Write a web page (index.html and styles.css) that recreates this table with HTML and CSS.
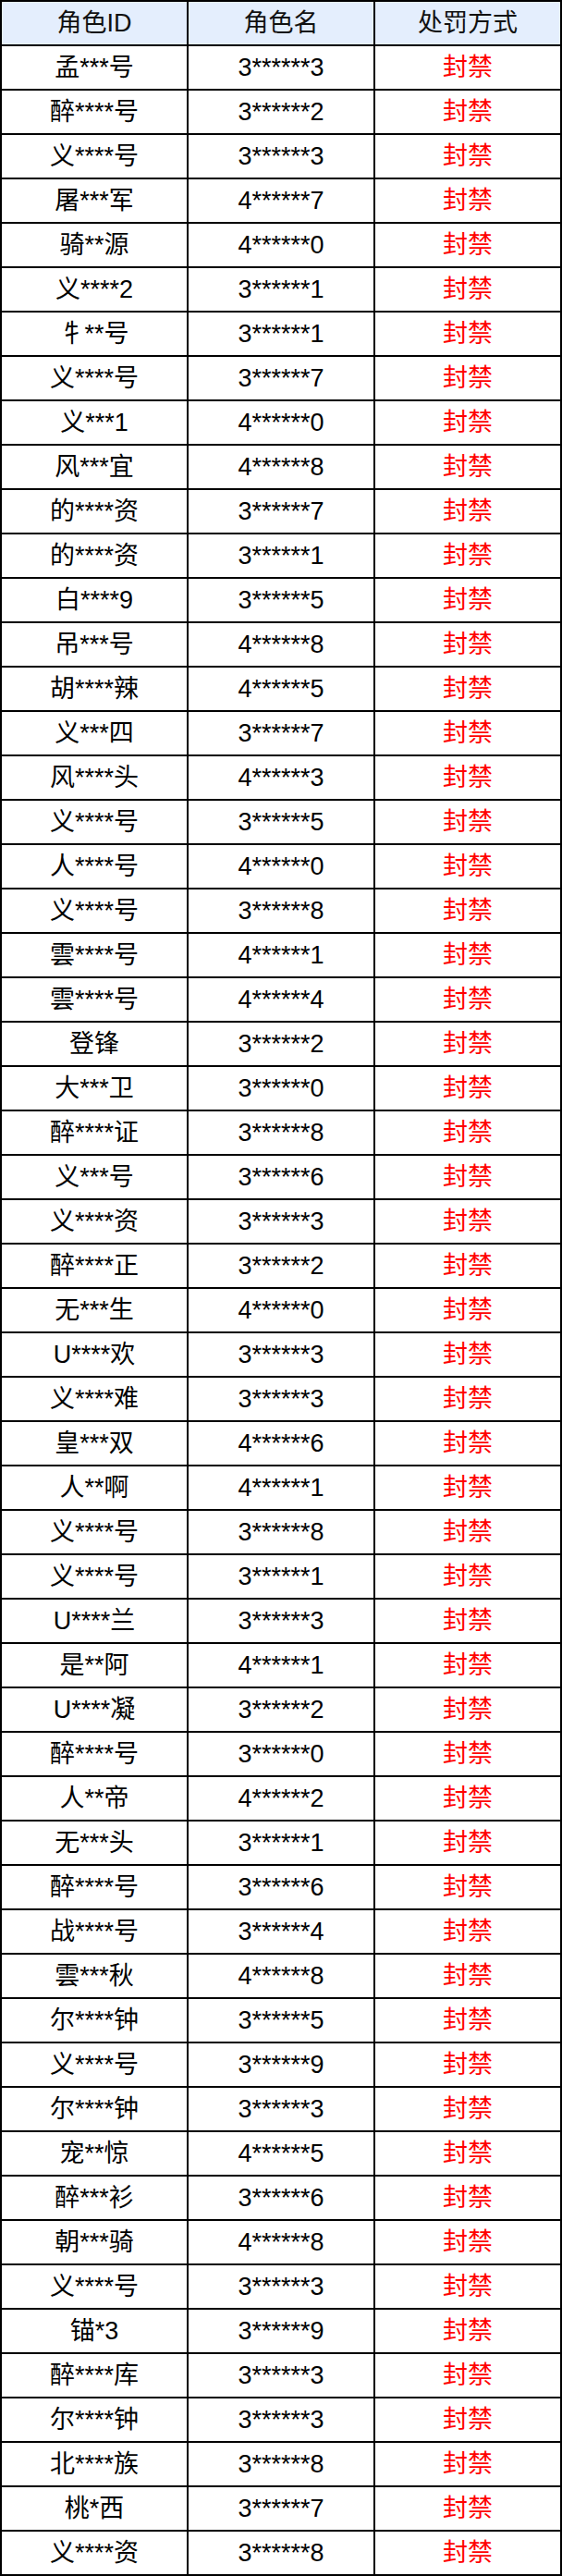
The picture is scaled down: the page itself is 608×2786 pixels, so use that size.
FILE: index.html
```html
<!DOCTYPE html>
<html lang="zh-CN">
<head>
<meta charset="utf-8">
<title>处罚名单</title>
<link rel="stylesheet" href="styles.css">
</head>
<body>
<div class="table">
  <div class="cell head">角色ID</div><div class="cell head">角色名</div><div class="cell head">处罚方式</div>
  <div class="cell">孟***号</div><div class="cell">3******3</div><div class="cell ban">封禁</div>
  <div class="cell">醉****号</div><div class="cell">3******2</div><div class="cell ban">封禁</div>
  <div class="cell">义****号</div><div class="cell">3******3</div><div class="cell ban">封禁</div>
  <div class="cell">屠***军</div><div class="cell">4******7</div><div class="cell ban">封禁</div>
  <div class="cell">骑**源</div><div class="cell">4******0</div><div class="cell ban">封禁</div>
  <div class="cell">义****2</div><div class="cell">3******1</div><div class="cell ban">封禁</div>
  <div class="cell">牜**号</div><div class="cell">3******1</div><div class="cell ban">封禁</div>
  <div class="cell">义****号</div><div class="cell">3******7</div><div class="cell ban">封禁</div>
  <div class="cell">义***1</div><div class="cell">4******0</div><div class="cell ban">封禁</div>
  <div class="cell">风***宜</div><div class="cell">4******8</div><div class="cell ban">封禁</div>
  <div class="cell">的****资</div><div class="cell">3******7</div><div class="cell ban">封禁</div>
  <div class="cell">的****资</div><div class="cell">3******1</div><div class="cell ban">封禁</div>
  <div class="cell">白****9</div><div class="cell">3******5</div><div class="cell ban">封禁</div>
  <div class="cell">吊***号</div><div class="cell">4******8</div><div class="cell ban">封禁</div>
  <div class="cell">胡****辣</div><div class="cell">4******5</div><div class="cell ban">封禁</div>
  <div class="cell">义***四</div><div class="cell">3******7</div><div class="cell ban">封禁</div>
  <div class="cell">风****头</div><div class="cell">4******3</div><div class="cell ban">封禁</div>
  <div class="cell">义****号</div><div class="cell">3******5</div><div class="cell ban">封禁</div>
  <div class="cell">人****号</div><div class="cell">4******0</div><div class="cell ban">封禁</div>
  <div class="cell">义****号</div><div class="cell">3******8</div><div class="cell ban">封禁</div>
  <div class="cell">雲****号</div><div class="cell">4******1</div><div class="cell ban">封禁</div>
  <div class="cell">雲****号</div><div class="cell">4******4</div><div class="cell ban">封禁</div>
  <div class="cell">登锋</div><div class="cell">3******2</div><div class="cell ban">封禁</div>
  <div class="cell">大***卫</div><div class="cell">3******0</div><div class="cell ban">封禁</div>
  <div class="cell">醉****证</div><div class="cell">3******8</div><div class="cell ban">封禁</div>
  <div class="cell">义***号</div><div class="cell">3******6</div><div class="cell ban">封禁</div>
  <div class="cell">义****资</div><div class="cell">3******3</div><div class="cell ban">封禁</div>
  <div class="cell">醉****正</div><div class="cell">3******2</div><div class="cell ban">封禁</div>
  <div class="cell">无***生</div><div class="cell">4******0</div><div class="cell ban">封禁</div>
  <div class="cell">U****欢</div><div class="cell">3******3</div><div class="cell ban">封禁</div>
  <div class="cell">义****难</div><div class="cell">3******3</div><div class="cell ban">封禁</div>
  <div class="cell">皇***双</div><div class="cell">4******6</div><div class="cell ban">封禁</div>
  <div class="cell">人**啊</div><div class="cell">4******1</div><div class="cell ban">封禁</div>
  <div class="cell">义****号</div><div class="cell">3******8</div><div class="cell ban">封禁</div>
  <div class="cell">义****号</div><div class="cell">3******1</div><div class="cell ban">封禁</div>
  <div class="cell">U****兰</div><div class="cell">3******3</div><div class="cell ban">封禁</div>
  <div class="cell">是**阿</div><div class="cell">4******1</div><div class="cell ban">封禁</div>
  <div class="cell">U****凝</div><div class="cell">3******2</div><div class="cell ban">封禁</div>
  <div class="cell">醉****号</div><div class="cell">3******0</div><div class="cell ban">封禁</div>
  <div class="cell">人**帝</div><div class="cell">4******2</div><div class="cell ban">封禁</div>
  <div class="cell">无***头</div><div class="cell">3******1</div><div class="cell ban">封禁</div>
  <div class="cell">醉****号</div><div class="cell">3******6</div><div class="cell ban">封禁</div>
  <div class="cell">战****号</div><div class="cell">3******4</div><div class="cell ban">封禁</div>
  <div class="cell">雲***秋</div><div class="cell">4******8</div><div class="cell ban">封禁</div>
  <div class="cell">尔****钟</div><div class="cell">3******5</div><div class="cell ban">封禁</div>
  <div class="cell">义****号</div><div class="cell">3******9</div><div class="cell ban">封禁</div>
  <div class="cell">尔****钟</div><div class="cell">3******3</div><div class="cell ban">封禁</div>
  <div class="cell">宠**惊</div><div class="cell">4******5</div><div class="cell ban">封禁</div>
  <div class="cell">醉***衫</div><div class="cell">3******6</div><div class="cell ban">封禁</div>
  <div class="cell">朝***骑</div><div class="cell">4******8</div><div class="cell ban">封禁</div>
  <div class="cell">义****号</div><div class="cell">3******3</div><div class="cell ban">封禁</div>
  <div class="cell">锚*3</div><div class="cell">3******9</div><div class="cell ban">封禁</div>
  <div class="cell">醉****库</div><div class="cell">3******3</div><div class="cell ban">封禁</div>
  <div class="cell">尔****钟</div><div class="cell">3******3</div><div class="cell ban">封禁</div>
  <div class="cell">北****族</div><div class="cell">3******8</div><div class="cell ban">封禁</div>
  <div class="cell">桃*西</div><div class="cell">3******7</div><div class="cell ban">封禁</div>
  <div class="cell">义****资</div><div class="cell">3******8</div><div class="cell ban">封禁</div>
</div>
</body>
</html>
```

FILE: styles.css
```css
html, body {
  margin: 0;
  padding: 0;
  background: #ffffff;
}

.table {
  width: 608px;
  box-sizing: border-box;
  display: grid;
  grid-template-columns: repeat(3, 200px);
  grid-auto-rows: 46px;
  gap: 2px;
  padding: 2px;
  background: #000000;
}

.cell {
  display: flex;
  align-items: center;
  justify-content: center;
  background: #ffffff;
  color: #000000;
  font-family: "Liberation Sans", "Noto Sans CJK SC", sans-serif;
  font-size: 27px;
  line-height: 1;
  white-space: nowrap;
}

.cell.head {
  background: #e4eefd;
  color: #111111;
}

.cell.ban {
  color: #ff0000;
}
```
